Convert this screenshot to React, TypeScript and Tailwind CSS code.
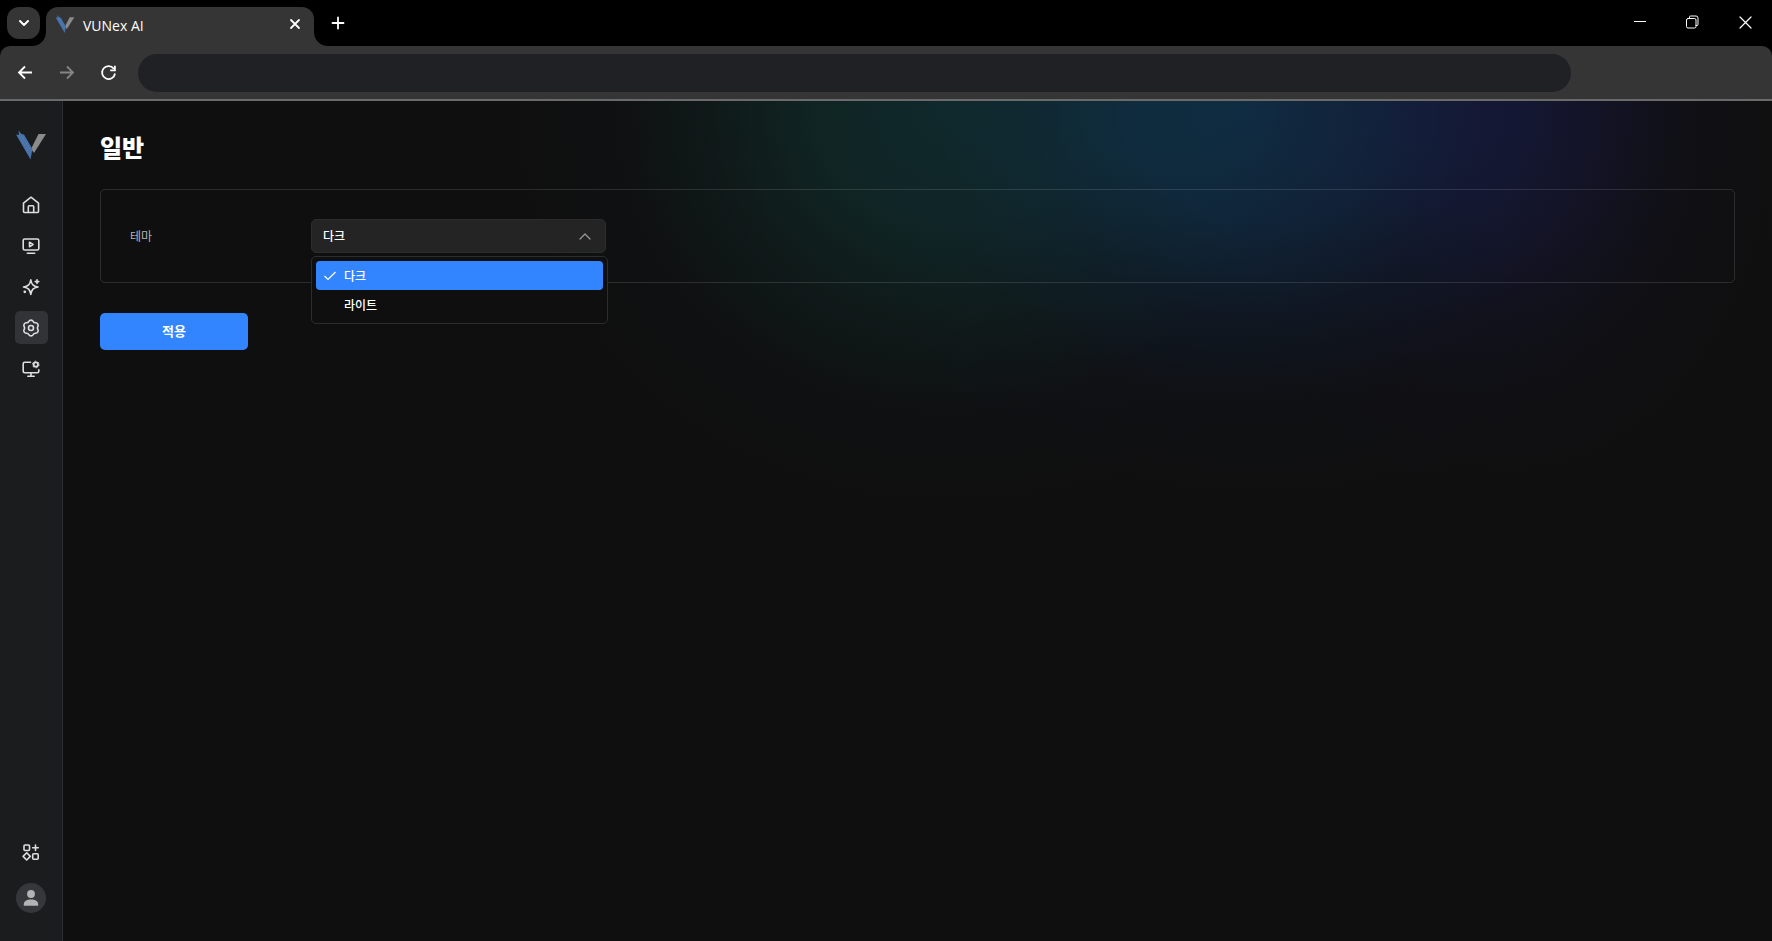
import { useState, type ReactNode } from "react";

type Option = { value: string; label: string };

const THEMES: Option[] = [
  { value: "dark", label: "다크" },
  { value: "light", label: "라이트" },
];

function Logo({ className }: { className: string }) {
  return (
    <svg viewBox="0 0 32 32" className={className} aria-hidden="true">
      <path d="M23.500 5H31L19 24l-3-4z" fill="#8b8b8b" />
      <path d="M1 5.500l3 .5-.500-4.500 3 3.500 2.500.500L17.500 20l-2 10.500z" fill="#456fa8" />
      <path d="M3.500 6l12 20M6 5.500l10.500 17" stroke="#6c98bd" strokeWidth=".8" strokeDasharray="1 1" fill="none" />
    </svg>
  );
}

function Icon({ children, className = "size-5" }: { children: ReactNode; className?: string }) {
  return (
    <svg
      viewBox="0 0 20 20"
      className={className}
      fill="none"
      stroke="currentColor"
      strokeWidth="1.6"
      strokeLinecap="round"
      strokeLinejoin="round"
      aria-hidden="true"
    >
      {children}
    </svg>
  );
}

function BrowserChrome() {
  return (
    <header className="shrink-0 bg-black text-white">
      <div className="flex h-[46px] items-end">
        <button type="button" aria-label="Search tabs" className="mb-[7px] ml-[7px] grid h-8 w-[33px] place-items-center rounded-xl bg-[#353535]">
          <Icon className="size-5">
            <path d="M6 8l4 4 4-4" strokeWidth="2" />
          </Icon>
        </button>

        <div className="relative ml-[6px] flex h-[39px] w-[268px] items-center rounded-t-xl bg-[#353535] pr-[9px] pb-1.5 pl-[9px]">
          <svg viewBox="0 0 14 14" className="absolute bottom-0 -left-3.5 size-3.5" aria-hidden="true">
            <path d="M14 0v14H0A14 14 0 0 0 14 0z" fill="#353535" />
          </svg>
          <svg viewBox="0 0 14 14" className="absolute -right-3.5 bottom-0 size-3.5" aria-hidden="true">
            <path d="M0 0v14h14A14 14 0 0 1 0 0z" fill="#353535" />
          </svg>
          <Logo className="size-5" />
          <span className="ml-2 flex-1 pt-1 font-['Open_Sans',sans-serif] text-[14px]/5">VUNex AI</span>
          <button type="button" aria-label="Close tab" className="grid size-5 place-items-center">
            <Icon>
              <path d="M6 6l8 8M14 6l-8 8" strokeWidth="1.8" />
            </Icon>
          </button>
        </div>

        <button type="button" aria-label="New tab" className="mb-[13px] ml-[14px] grid size-5 place-items-center">
          <Icon>
            <path d="M10 4.500v11M4.500 10h11" strokeWidth="1.8" />
          </Icon>
        </button>

        <div className="mr-4 mb-[13px] ml-auto flex gap-[33px]">
          <button type="button" aria-label="Minimize" className="size-5">
            <Icon>
              <path d="M4 8.500h12" strokeWidth="1" strokeLinecap="butt" />
            </Icon>
          </button>
          <button type="button" aria-label="Restore" className="size-5">
            <Icon>
              <rect x="3.500" y="5.500" width="9.500" height="9.500" rx="1.500" strokeWidth="1" />
              <path d="M6.500 5V4A1 1 0 0 1 7.500 3H13a2 2 0 0 1 2 2v6.500a1 1 0 0 1-1 1h-1" strokeWidth="1" />
            </Icon>
          </button>
          <button type="button" aria-label="Close" className="size-5">
            <Icon>
              <path d="M4 4l11 11M15 4L4 15" strokeWidth="1.2" />
            </Icon>
          </button>
        </div>
      </div>

      <div className="flex h-[55px] items-center rounded-t-[10px] border-b-2 border-[#6a6a6a] bg-[#353535] pl-[15px]">
        <button type="button" aria-label="Back" className="size-5">
          <Icon>
            <path d="M17 9.500H4.500M10 3.500l-6 6 6 6" strokeWidth="1.8" strokeLinecap="butt" strokeLinejoin="miter" />
          </Icon>
        </button>
        <button type="button" aria-label="Forward" className="ml-[22px] size-5 text-[#858585]">
          <Icon>
            <path d="M3 9.500h12.500M10 3.500l6 6-6 6" strokeWidth="1.8" strokeLinecap="butt" strokeLinejoin="miter" />
          </Icon>
        </button>
        <button type="button" aria-label="Reload" className="ml-[21px] size-5">
          <Icon>
            <path d="M15.800 5.700A6.500 6.500 0 1 0 17 10.500M16.900 2.700v4.600h-4.700" strokeWidth="1.8" strokeLinecap="butt" strokeLinejoin="miter" />
          </Icon>
        </button>
        <input
          type="text"
          aria-label="Address"
          className="mr-[201px] ml-5 h-[38px] min-w-0 flex-1 rounded-full bg-[#202125] px-5 text-sm outline-none"
        />
      </div>
    </header>
  );
}

function NavLink({ label, active = false, children }: { label: string; active?: boolean; children: ReactNode }) {
  return (
    <a
      href="#"
      aria-label={label}
      aria-current={active ? "page" : undefined}
      className={`grid size-[33px] place-items-center rounded-[5px] ${active ? "bg-[#323337]" : ""}`}
    >
      <Icon>{children}</Icon>
    </a>
  );
}

function Sidebar() {
  return (
    <nav className="flex w-[63px] shrink-0 flex-col items-center border-r border-[#2c2d30] bg-[#1b1c1e] pt-7 pb-7 text-[#dedede]">
      <Logo className="size-8" />
      <div className="mt-[27px] flex flex-col gap-2">
        <NavLink label="홈">
          <path d="M2.500 8.200L10 2.200l7.500 6v8.300a1 1 0 0 1-1 1h-13a1 1 0 0 1-1-1z" />
          <path d="M7.300 17.200v-5.400a1 1 0 0 1 1-1h3.400a1 1 0 0 1 1 1v5.400" />
        </NavLink>
        <NavLink label="영상">
          <rect x="2.200" y="3" width="15.600" height="11" rx="1.500" />
          <path d="M8.500 6.300v4.400l3.500-2.200zM6.300 17.300h7.400" />
        </NavLink>
        <NavLink label="AI">
          <path d="M9.800 2.800c.8 4.800 2.500 6.500 7.200 7.200-4.700.8-6.400 2.500-7.200 7.400-.8-4.900-2.500-6.600-7.300-7.400 4.800-.7 6.500-2.400 7.300-7.200z" />
          <path d="M16 2.800v3.600M14.200 4.600h3.600" />
          <circle cx="3.800" cy="14.800" r="1.400" fill="currentColor" stroke="none" />
        </NavLink>
        <NavLink label="설정" active>
          <path d="M7.840 3.340A2.500 2.500 0 0 1 12.160 3.340A2.600 2.600 0 0 0 14.680 4.800A2.500 2.500 0 0 1 16.850 8.540A2.600 2.600 0 0 0 16.850 11.460A2.500 2.500 0 0 1 14.680 15.200A2.600 2.600 0 0 0 12.160 16.660A2.500 2.500 0 0 1 7.840 16.660A2.600 2.600 0 0 0 5.320 15.200A2.500 2.500 0 0 1 3.150 11.460A2.600 2.600 0 0 0 3.150 8.540A2.500 2.500 0 0 1 5.320 4.800A2.600 2.600 0 0 0 7.840 3.340z" />
          <circle cx="10" cy="10" r="2.500" />
        </NavLink>
        <NavLink label="모니터 설정">
          <path d="M9.500 3.300H3.700a1.500 1.500 0 0 0-1.500 1.500v7.400a1.500 1.500 0 0 0 1.500 1.500h12.600a1.500 1.500 0 0 0 1.500-1.500v-1.500M10 14v3M6.800 17.200h6.400" />
          <circle cx="14.800" cy="5.500" r="2.200" strokeWidth="1.8" />
          <circle cx="14.800" cy="5.500" r="3.300" strokeWidth="1" strokeLinecap="butt" strokeDasharray="1.700 1.756" />
        </NavLink>
      </div>

      <div className="mt-auto flex flex-col items-center gap-[15px]">
        <NavLink label="앱">
          <rect x="3" y="3" width="5.500" height="5.500" rx="1" />
          <rect x="11.700" y="11.700" width="5.500" height="5.500" rx="1" />
          <path d="M14.500 3v5.500M11.700 5.700h5.600M5.700 10.800l3.600 3.600-3.600 3.600-3.600-3.600z" />
        </NavLink>
        <button type="button" aria-label="프로필" className="grid size-[30px] place-items-center rounded-full bg-[#36373b]">
          <svg viewBox="0 0 20 20" className="size-5" fill="#b4b4b4" aria-hidden="true">
            <circle cx="10" cy="6" r="3.900" />
            <path d="M2.800 17.800v-1.300c0-3.300 2.700-5 7.200-5s7.200 1.700 7.200 5v1.300z" />
          </svg>
        </button>
      </div>
    </nav>
  );
}

function ThemeSelect({ value, onChange }: { value: string; onChange: (value: string) => void }) {
  return (
    <div className="relative w-[295px]">
      <select
        id="theme"
        value={value}
        onChange={(e) => onChange(e.target.value)}
        className="block h-[34px] w-full appearance-none rounded-[5px] border border-[#2b2c2d] bg-[#242424] px-[11px] text-[12px] font-medium text-white outline-none"
      >
        {THEMES.map((theme) => (
          <option key={theme.value} value={theme.value}>
            {theme.label}
          </option>
        ))}
      </select>
      <svg
        viewBox="0 0 12 12"
        className="pointer-events-none absolute top-[11px] right-[15px] size-3"
        fill="none"
        stroke="#9a9a9a"
        strokeWidth="1.2"
        strokeLinecap="round"
        strokeLinejoin="round"
        aria-hidden="true"
      >
        <path d="M1 9l5-5 5 5" />
      </svg>

      <ul
        role="listbox"
        aria-label="테마"
        className="absolute top-[37px] left-0 z-10 w-[297px] rounded-[5px] border border-[#2c2d2f] bg-[#0f0f0f] p-1 text-[12px] font-medium text-white"
      >
        {THEMES.map((theme) => {
          const selected = theme.value === value;
          return (
            <li
              key={theme.value}
              role="option"
              aria-selected={selected}
              onClick={() => onChange(theme.value)}
              className={`flex h-[29px] items-center gap-2 rounded-[4px] pl-2 ${selected ? "bg-[#3385ff]" : ""}`}
            >
              <svg
                viewBox="0 0 12 12"
                className={`size-3 ${selected ? "" : "invisible"}`}
                fill="none"
                stroke="currentColor"
                strokeWidth="1.2"
                aria-hidden="true"
              >
                <path d="M.5 6l3.500 3.500 7.500-7.500" />
              </svg>
              {theme.label}
            </li>
          );
        })}
      </ul>
    </div>
  );
}

export default function App() {
  const [theme, setTheme] = useState("dark");

  return (
    <div className="flex min-h-screen flex-col bg-[#0f0f0f] font-['Noto_Sans_CJK_KR',sans-serif]">
      <BrowserChrome />
      <div className="flex flex-1">
        <Sidebar />
        <main className="relative isolate min-w-0 flex-1 overflow-hidden px-[37px] pt-[26px]">
          {/* ambient glow behind the page */}
          <div className="absolute inset-x-0 top-0 -z-10 h-[420px]">
            <div className="absolute -top-[390px] left-[26%] h-[800px] w-[52%] bg-[radial-gradient(closest-side,rgba(16,62,62,0.56),rgba(16,62,60,0.46)_30%,rgba(16,58,54,0.24)_54%,rgba(16,40,60,0.06)_76%,transparent)]" />
            <div className="absolute -top-[390px] left-[45%] h-[800px] w-[50%] bg-[radial-gradient(closest-side,rgba(16,66,106,0.55),rgba(16,62,106,0.43)_28%,rgba(16,50,100,0.2)_52%,rgba(20,30,80,0.06)_75%,transparent)]" />
            <div className="absolute -top-[390px] left-[67%] h-[800px] w-[35%] bg-[radial-gradient(closest-side,rgba(28,28,86,0.42),rgba(28,28,84,0.32)_28%,rgba(26,24,72,0.16)_52%,rgba(24,20,50,0.08)_75%,transparent)]" />
          </div>

          <h1 className="text-[24px]/10 font-black text-white">일반</h1>

          <section className="mt-[22px] flex h-[94px] items-center rounded-[5px] border border-white/12 pl-[29px]">
            <label htmlFor="theme" className="w-[181px] text-[12px] text-[#b4b4b4]">
              테마
            </label>
            <ThemeSelect value={theme} onChange={setTheme} />
          </section>

          <button type="button" className="mt-[30px] h-[37px] w-[148px] rounded-[5px] bg-[#3385ff] pb-0.5 text-[13px] font-bold text-white">
            적용
          </button>
        </main>
      </div>
    </div>
  );
}
